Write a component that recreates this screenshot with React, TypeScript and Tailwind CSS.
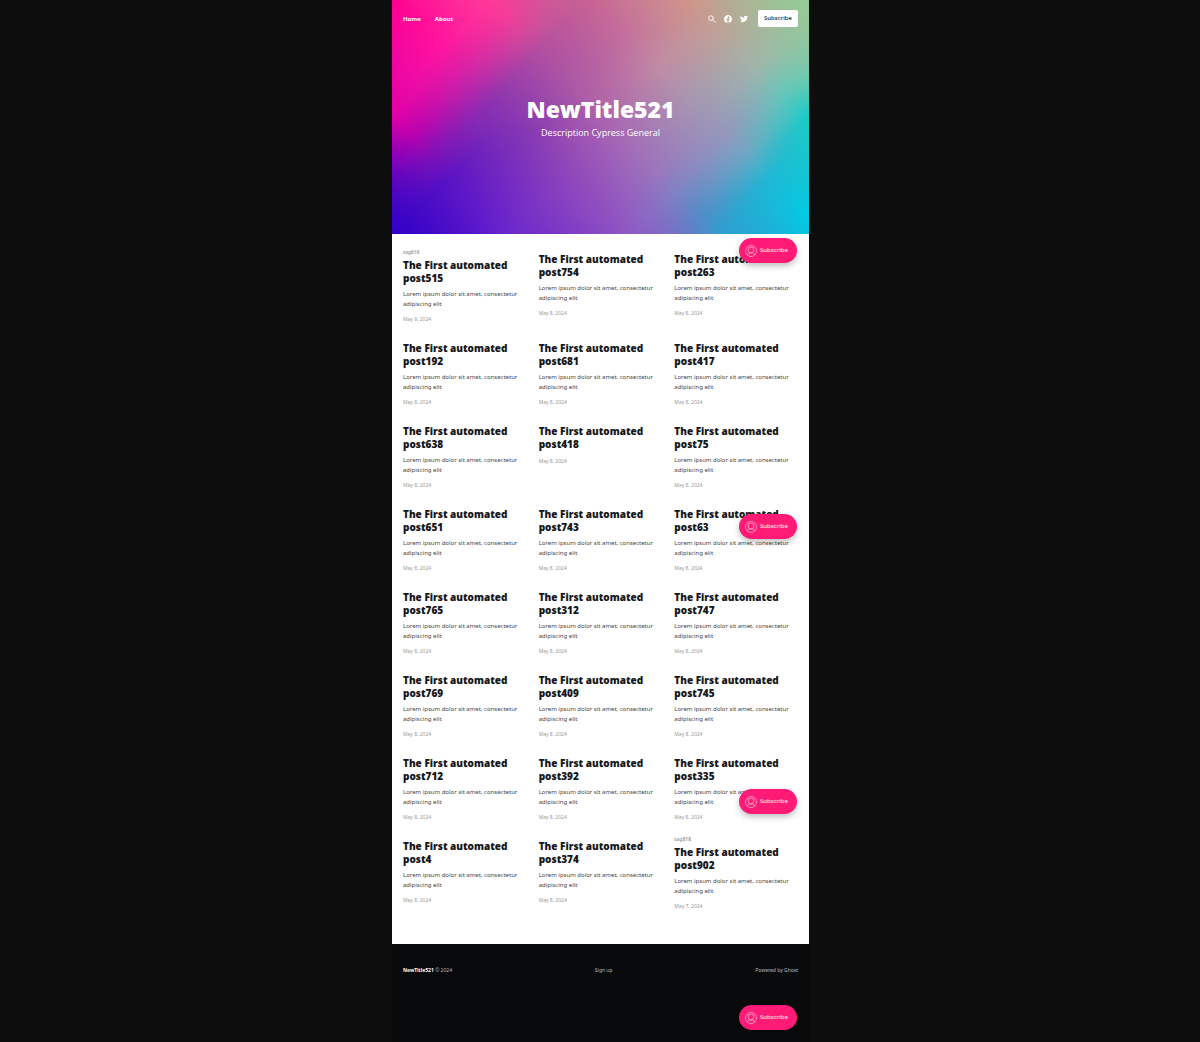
import type { ReactNode } from "react";

type Post = { id: number; date?: string; tag?: string; excerpt?: boolean };

const posts: Post[] = [
  { id: 515, date: "May 9, 2024", tag: "tag616" },
  { id: 754 },
  { id: 263 },
  { id: 192 },
  { id: 681 },
  { id: 417 },
  { id: 638 },
  { id: 418, excerpt: false },
  { id: 75 },
  { id: 651 },
  { id: 743 },
  { id: 63 },
  { id: 765 },
  { id: 312 },
  { id: 747 },
  { id: 769 },
  { id: 409 },
  { id: 745 },
  { id: 712 },
  { id: 392 },
  { id: 335 },
  { id: 4 },
  { id: 374 },
  { id: 902, date: "May 7, 2024", tag: "tag818" },
];

/* Each layer is one diagonal colour run, faded in over the one before it, from bottom left to top right. */
const coverLayers = [
  "bg-[#3000c8]",
  "bg-[linear-gradient(135deg,#e000a8_18%,#b800b0_24%,#8010b8_30%,#5c14c4_36%,#6820cc_49%,#6c28cc_54%)] mask-[linear-gradient(45deg,transparent_0%,black_18%)]",
  "bg-[linear-gradient(135deg,#ff0090_0%,#ff14a0_15%,#d024a8_23%,#8c34b0_31%,#8438b4_41%,#9048bc_56%,#9058c4_72%)] mask-[linear-gradient(45deg,transparent_18%,black_36%)]",
  "bg-[linear-gradient(135deg,#ff3a98_15%,#f43c98_20%,#d04a9c_26%,#b44ea0_30%,#ac54a4_36%,#b060a8_46%,#a86cb4_56%,#9c78bc_67%,#8084c4_73%,#4c90c8_81%,#2ca0d0_87%)] mask-[linear-gradient(45deg,transparent_36%,black_51%)]",
  "bg-[linear-gradient(135deg,#c86494_31%,#c4709c_41%,#c08ca4_51%,#a898b0_61%,#9498bc_72%,#70a8c4_78%,#20b8d4_85%,#00cce4_97%)] mask-[linear-gradient(45deg,transparent_51%,black_67%)]",
  "bg-[linear-gradient(135deg,#d0958a_46%,#bca498_56%,#9cb8ac_67%,#60c8bc_75%,#18ccc8_82%)] mask-[linear-gradient(45deg,transparent_67%,black_82%)]",
  "bg-[#94cc94] mask-[linear-gradient(45deg,transparent_82%,black_100%)]",
];

function SearchIcon() {
  return (
    <svg viewBox="0 0 24 24" className="size-2" fill="none" stroke="currentColor" strokeWidth="2.6" strokeLinecap="round">
      <circle cx="9" cy="9.500" r="7.200" />
      <path d="M14.500 15l7.500 7.500" />
    </svg>
  );
}

function FacebookIcon() {
  return (
    <svg viewBox="0 0 24 24" className="size-2" fill="currentColor">
      <path d="M24 12.07C24 5.4 18.63 0 12 0S0 5.4 0 12.07C0 18.1 4.39 23.1 10.13 24v-8.44H7.08v-3.49h3.05V9.41c0-3.02 1.79-4.69 4.53-4.69 1.31 0 2.68.24 2.68.24v2.97h-1.51c-1.49 0-1.96.93-1.96 1.89v2.25h3.33l-.53 3.49h-2.8V24C19.61 23.1 24 18.1 24 12.07z" />
    </svg>
  );
}

function TwitterIcon() {
  return (
    <svg viewBox="0 0 24 24" className="size-2" fill="currentColor">
      <path d="M23.95 4.57a10 10 0 0 1-2.82.77 4.96 4.96 0 0 0 2.16-2.72c-.95.55-2 .96-3.13 1.18a4.92 4.92 0 0 0-8.38 4.48C7.69 8.09 4.07 6.13 1.64 3.16a4.92 4.92 0 0 0 1.52 6.57 4.9 4.9 0 0 1-2.23-.61v.06a4.92 4.92 0 0 0 3.95 4.83 5 5 0 0 1-2.21.08 4.94 4.94 0 0 0 4.6 3.42A9.87 9.87 0 0 1 0 19.54a13.99 13.99 0 0 0 7.55 2.21c9.05 0 14-7.5 14-13.98 0-.21 0-.42-.02-.63a9.94 9.94 0 0 0 2.46-2.55z" />
    </svg>
  );
}

function MemberIcon() {
  return (
    <svg viewBox="0 0 24 24" className="size-3 shrink-0" fill="none" stroke="currentColor" strokeWidth="1.1">
      <circle cx="12" cy="12" r="11" />
      <circle cx="12" cy="10" r="5.800" />
      <path d="M4.500 20c1-3 4-4.200 7.500-4.200s6.500 1.200 7.500 4.200" />
    </svg>
  );
}

function PortalButton({ place }: { place: string }) {
  return (
    <button
      type="button"
      className={`absolute right-3 flex h-[25px] items-center gap-[3px] rounded-full bg-[#ff1a75] pr-[9px] pl-[6px] text-[6px] font-medium text-white/90 shadow-[0_3px_6px_rgba(0,0,0,0.25)] ${place}`}
    >
      <MemberIcon />
      Subscribe
    </button>
  );
}

function IconLink({ label, children }: { label: string; children: ReactNode }) {
  return (
    <a href="#" aria-label={label}>
      {children}
    </a>
  );
}

function PostCard({ post }: { post: Post }) {
  return (
    <article className={post.tag ? "" : "pt-[6px]"}>
      {post.tag && <p className="h-3 text-[5px] leading-[10px] font-semibold text-[#999]">{post.tag}</p>}
      <h2 className="font-['Open_Sans',sans-serif] text-[10px] leading-[13px] font-extrabold text-[#15171a]">
        <a href="#">
          The First automated
          <br />
          post{post.id}
        </a>
      </h2>
      {post.excerpt !== false && (
        <p className="mt-1 text-[6px] leading-[10px] text-[#444]">
          Lorem ipsum dolor sit amet, consectetur adipiscing elit
        </p>
      )}
      <time className="mt-[6px] block text-[5px] leading-2 text-[#999]">{post.date ?? "May 8, 2024"}</time>
    </article>
  );
}

export default function App() {
  return (
    <div className="min-h-screen bg-[#0d0d0d] pl-px font-['Noto_Sans','Open_Sans',sans-serif]">
      <div className="relative mx-auto flex min-h-screen w-full max-w-[417px] flex-col bg-[#090a0c]">
        <header className="relative isolate px-[11px] text-white">
          {coverLayers.map((layer) => (
            <div key={layer} className={`absolute inset-0 -z-10 ${layer}`} />
          ))}
          <div className="flex items-center justify-between pt-[10px]">
            <nav className="flex gap-[14px] text-[6px] leading-[10px] font-bold">
              <a href="#">Home</a>
              <a href="#">About</a>
            </nav>
            <div className="flex items-center gap-2">
              <IconLink label="Search">
                <SearchIcon />
              </IconLink>
              <IconLink label="Facebook">
                <FacebookIcon />
              </IconLink>
              <IconLink label="Twitter">
                <TwitterIcon />
              </IconLink>
              <a
                href="#"
                className="ml-[2px] flex h-[17px] items-center rounded-[2px] bg-white px-[6px] text-[6px] font-medium text-[#15171a]"
              >
                Subscribe
              </a>
            </div>
          </div>
          <div className="pt-[66px] pb-[93px] text-center font-['Open_Sans',sans-serif]">
            <h1 className="text-[23px] leading-8 font-extrabold">NewTitle521</h1>
            <p className="text-[9px] leading-4">Description Cypress General</p>
          </div>
        </header>

        <main className="grid grid-cols-3 gap-x-3 gap-y-[13px] bg-white px-[11px] pt-[13px] pb-[34px]">
          {posts.map((post) => (
            <PostCard key={post.id} post={post} />
          ))}
        </main>

        <footer className="flex justify-between px-[11px] pt-[21px] text-[5px] leading-[10px] text-white/70">
          <p>
            <a href="#" className="font-bold text-white">
              NewTitle521
            </a>{" "}
            © 2024
          </p>
          <a href="#">Sign up</a>
          <a href="#">Powered by Ghost</a>
        </footer>

        <PortalButton place="top-[238px]" />
        <PortalButton place="top-[514px]" />
        <PortalButton place="top-[789px]" />
        <PortalButton place="top-[1005px]" />
      </div>
    </div>
  );
}
